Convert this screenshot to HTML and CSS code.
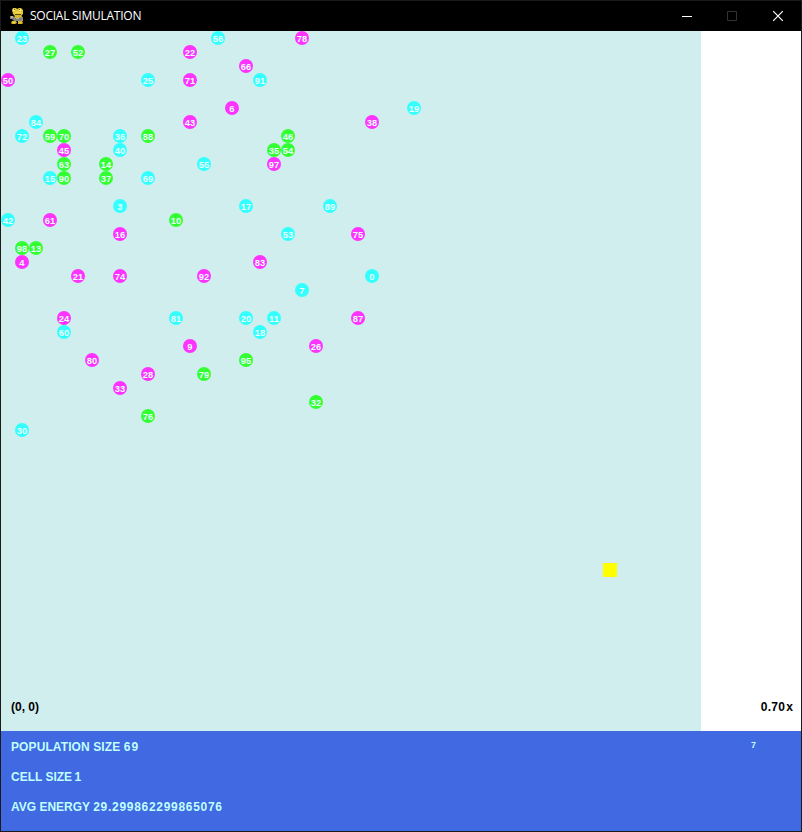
FILE: index.html
```html
<!DOCTYPE html>
<html lang="en">
<head>
<meta charset="utf-8">
<title>SOCIAL SIMULATION</title>
<link rel="stylesheet" href="styles.css">
</head>
<body>
<div class="window">
  <header class="titlebar">
    <svg class="logo" width="16" height="18" viewBox="0 0 16 18">
      <path fill="#e3c634" d="M4 1h3l1 1 2-1h2l2 2v4l-2 2H6L4 7 3 3z"/>
      <path fill="#d9b92c" d="M6 8h6l2 3v3H5V11zM3 14h4l1 2-2 1H3l-1-1zM9 14h4l1 2-1 1H9z"/>
      <path fill="#85847c" d="M1 9h3l2 2h4l2-1 2 1v2l-2 1H5l-2-2H1z"/>
      <path fill="#b5b2a6" d="M2 9h2v2H2zM7 11h3v1H7z"/>
      <path fill="#fff2a0" d="M4 2h2v2H4zM10 2h2v2h-2z"/>
      <path fill="#f5df58" d="M6 5h6v1H6zM4 15h2v1H4z"/>
      <path fill="#5c5222" d="M5 2h1v1H5zM10 2h1v1h-1zM6 7h6v1H6z"/>
    </svg>
    <h1 class="title">SOCIAL SIMULATION</h1>
    <div class="controls">
      <svg width="46" height="29" viewBox="0 0 46 29"><path d="M18 14.500h10" stroke="#fff"/></svg>
      <svg width="46" height="29" viewBox="0 0 46 29"><path d="M17.500 9.500h9v9h-9z" fill="none" stroke="#333"/></svg>
      <svg width="46" height="29" viewBox="0 0 46 29"><path d="M17.200 9.200l9.600 9.600M26.800 9.200l-9.600 9.600" stroke="#fff" stroke-width="1.200"/></svg>
    </div>
  </header>
  <main class="viewport">
    <div class="world" id="world"></div>
    <span class="readout position">(0, 0)</span>
    <span class="readout scale">0.70<span class="times">x</span></span>
  </main>
  <footer class="stats">
    <div class="lines">
      <p><span class="wide">POPULATION SIZE</span> <span class="num short">69</span></p>
      <p>CELL SIZE <span class="one">1</span></p>
      <p>AVG ENERGY <span class="num">29.299862299865076</span></p>
    </div>
    <span class="ticks">7</span>
  </footer>
</div>
<script src="world.js"></script>
</body>
</html>
```
FILE: styles.css
```css
* { box-sizing: border-box; margin: 0; }
body { background: #1a1a1a; font-family: "Liberation Sans", Arial, sans-serif; }
.window {
  width: 802px;
  height: 832px;
  border: 1px solid #1a1a1a;
  display: flex;
  flex-direction: column;
  overflow: hidden;
}
.titlebar {
  height: 30px;
  flex: none;
  display: flex;
  align-items: center;
  background: #000;
  padding-left: 8px;
}
.logo { flex: none; margin-right: 5px; }
.title {
  font: 400 12px/16px "Open Sans", "Noto Sans", sans-serif;
  letter-spacing: -0.25px;
  color: #fff;
  white-space: nowrap;
}
.controls { display: flex; margin: 0 -1px 0 auto; }
.viewport {
  position: relative;
  height: 700px;
  flex: none;
  background: #fff;
}
.world {
  width: 700px;
  height: 700px;
  display: grid;
  grid-template-columns: repeat(50, 14px);
  grid-template-rows: repeat(50, 14px);
  background: #d1eeee;
}
.agent {
  display: flex;
  justify-content: center;
  border-radius: 50%;
  color: #e8ffff;
  font-size: 9.4px;
  font-weight: 700;
  line-height: 15px;
  letter-spacing: 0.1px;
  white-space: nowrap;
}
.cyan { background: #33ffff; }
.magenta { background: #ff33ff; }
.green { background: #33ff33; }
.food { background: #ffff00; }
.readout {
  position: absolute;
  bottom: 17px;
  font-size: 12px;
  font-weight: 700;
  line-height: 14px;
  color: #000;
}
.position { left: 10px; }
.scale { right: 8px; letter-spacing: 0.3px; }
.times { margin-left: 1px; letter-spacing: 0; }
.stats {
  flex: 1;
  display: flex;
  justify-content: space-between;
  background: #4169e1;
  color: #bfffff;
  padding: 9px 45px 0 10px;
}
.lines {
  font-size: 12px;
  font-weight: 700;
  line-height: 14px;
  display: flex;
  flex-direction: column;
  gap: 16px;
}
.wide { letter-spacing: 0.1px; }
.num { letter-spacing: 0.7px; }
.short { letter-spacing: 1.2px; }
.one { margin-left: -1px; }
.ticks { font-size: 9px; font-weight: 700; line-height: 11px; }
```
FILE: world.js
```js
// Each entry: id, colour, column, row.
const agents = [
  [23,"cyan",1,0],[56,"cyan",15,0],[78,"magenta",21,0],
  [27,"green",3,1],[52,"green",5,1],[22,"magenta",13,1],
  [66,"magenta",17,2],
  [50,"magenta",0,3],[25,"cyan",10,3],[71,"magenta",13,3],[91,"cyan",18,3],
  [6,"magenta",16,5],[19,"cyan",29,5],
  [84,"cyan",2,6],[43,"magenta",13,6],[38,"magenta",26,6],
  [72,"cyan",1,7],[59,"green",3,7],[70,"green",4,7],[36,"cyan",8,7],[88,"green",10,7],[46,"green",20,7],
  [45,"magenta",4,8],[40,"cyan",8,8],[35,"green",19,8],[54,"green",20,8],
  [63,"green",4,9],[14,"green",7,9],[55,"cyan",14,9],[97,"magenta",19,9],
  [15,"cyan",3,10],[90,"green",4,10],[37,"green",7,10],[69,"cyan",10,10],
  [3,"cyan",8,12],[17,"cyan",17,12],[89,"cyan",23,12],
  [42,"cyan",0,13],[61,"magenta",3,13],[10,"green",12,13],
  [16,"magenta",8,14],[53,"cyan",20,14],[75,"magenta",25,14],
  [98,"green",1,15],[13,"green",2,15],
  [4,"magenta",1,16],[83,"magenta",18,16],
  [21,"magenta",5,17],[74,"magenta",8,17],[92,"magenta",14,17],[0,"cyan",26,17],
  [7,"cyan",21,18],
  [24,"magenta",4,20],[81,"cyan",12,20],[20,"cyan",17,20],[11,"cyan",19,20],[87,"magenta",25,20],
  [60,"cyan",4,21],[18,"cyan",18,21],
  [9,"magenta",13,22],[26,"magenta",22,22],
  [80,"magenta",6,23],[95,"green",17,23],
  [28,"magenta",10,24],[79,"green",14,24],
  [33,"magenta",8,25],
  [32,"green",22,26],
  [76,"green",10,27],
  [30,"cyan",1,28]
];
const world = document.getElementById("world");

function place(className, column, row, text) {
  const cell = document.createElement("span");
  cell.className = className;
  cell.style.gridArea = `${row + 1} / ${column + 1}`;
  cell.textContent = text;
  world.append(cell);
}

agents.forEach(([id, colour, column, row]) => place(`agent ${colour}`, column, row, id));
place("food", 43, 38, "");
```
